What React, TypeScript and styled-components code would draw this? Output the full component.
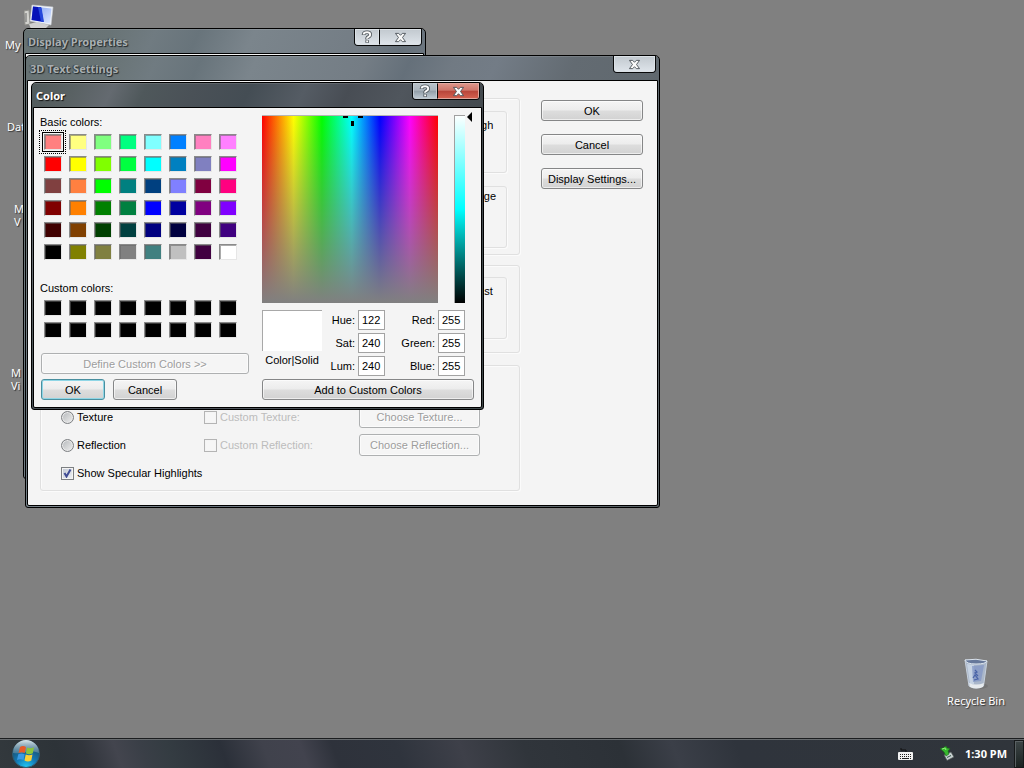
import React from "react";
import styled, { createGlobalStyle, css } from "styled-components";

const uiFont = `"Liberation Sans", Arial, sans-serif`;
const shellFont = `"Noto Sans", "Open Sans", sans-serif`;

const GlobalStyle = createGlobalStyle`
  *, *::before, *::after { box-sizing: border-box; }
  body { margin: 0; background: #808080; font: 11px/14px ${uiFont}; color: #000; }
  button, input { font: inherit; color: inherit; }
`;

const Screen = styled.div`
  display: flex;
  flex-direction: column;
  min-height: 100vh;
`;

const Desktop = styled.main`
  position: relative;
  flex: 1;
  min-height: 520px;
  overflow: hidden;
`;

/* ---------- desktop icons ---------- */

const Shortcut = styled.div<{ $x: number; $y: number }>`
  position: absolute;
  left: ${(p) => p.$x}px;
  top: ${(p) => p.$y}px;
  font: 11px/13px ${shellFont};
  color: #fff;
  text-shadow: 1px 1px 1px #333;
  white-space: pre-line;

  svg { display: block; margin: 0 0 8px 19px; }
`;

const Bin = styled(Shortcut)`
  left: auto;
  top: auto;
  right: 19px;
  bottom: 31px;
  svg { margin: 0 auto 4px; }
`;

/* ---------- windows ---------- */

const Frame = styled.section<{ $x: number; $y: number; $w: number; $h: number; $active?: boolean }>`
  position: absolute;
  left: ${(p) => p.$x}px;
  top: ${(p) => p.$y}px;
  width: ${(p) => p.$w}px;
  min-height: ${(p) => p.$h}px;
  display: flex;
  flex-direction: column;
  padding: 0 1px 1px;
  border: 1px solid #000;
  border-radius: 5px 5px 3px 3px;
  background: ${(p) =>
    p.$active
      ? "linear-gradient(115deg, #505a5b 0, #596163 40px, #646a70 75px, #4f585b 105px, #4a5157 150px, #444d54 200px, #555c64 250px, #484d54 290px, #50565d 340px, #454b50 400px, #3d4648 100%)"
      : "linear-gradient(115deg, #667172 0, #697476 80px, #707b81 120px, #68747b 160px, #7b858c 210px, #747d85 310px, #65707a 350px, #717a83 390px, #737c86 430px, #636b72 500px, #596266 100%)"};
`;

const TitleBar = styled.header<{ $active?: boolean }>`
  display: flex;
  justify-content: space-between;
  align-items: flex-start;
  height: 24px;
  padding: 0 2px 0 3px;
  border-top: 1px solid rgba(255, 255, 255, 0.12);

  h2 {
    margin: 0;
    font: bold 11px/24px ${shellFont};
    color: ${(p) => (p.$active ? "#fff" : "#a9afb1")};
    text-shadow: ${(p) => (p.$active ? "1px 1px 1px #111" : "1px 1px 1px #23292b, -1px 0 1px #333a3c")};
  }
`;

const Captions = styled.div`
  display: flex;
  margin-top: -1px;
  border: 1px solid #08090a;
  border-top: 0;
  border-radius: 0 0 4px 4px;
  overflow: hidden;
`;

const CaptionButton = styled.button<{ $kind: "help" | "close"; $active?: boolean }>`
  display: flex;
  align-items: center;
  justify-content: center;
  width: ${(p) => (p.$kind === "help" ? 24 : 41)}px;
  height: 16px;
  padding: 0;
  border: 1px solid ${(p) => (p.$active ? (p.$kind === "close" ? "#e2a79e" : "#c3cad0") : "#dbe1e6")};
  background: ${(p) =>
    !p.$active
      ? "linear-gradient(#c3cad0, #dde3e9)"
      : p.$kind === "close"
        ? "linear-gradient(#dc9488 0, #cf7569 45%, #b8453a 50%, #d3604f 100%)"
        : "linear-gradient(#b9c1c8 0, #aab4bc 45%, #929ea8 50%, #bcc7d0 100%)"};

  & + & { border-left: 1px solid #08090a; width: 42px; }
`;

const Body = styled.div`
  flex: 1;
  display: flex;
  border: 1px solid #000;
  border-radius: 0 0 2px 2px;
  background: #f4f4f4;
`;

const SettingsBody = styled(Body)`
  justify-content: space-between;
  align-items: flex-start;
  padding: 17px 14px 12px 12px;
`;

const ColorBody = styled(Body)`
  gap: 13px;
  padding: 7px 7px 7px 6px;
`;

/* ---------- controls ---------- */

const PushButton = styled.button<{ $w?: number; $h?: number; $default?: boolean }>`
  width: ${(p) => (p.$w ? p.$w + "px" : "100%")};
  height: ${(p) => p.$h ?? 21}px;
  flex: none;
  padding: 0;
  border: 1px solid #858687;
  border-radius: 3px;
  background: linear-gradient(#f5f5f5 0, #ececec 48%, #dddddd 52%, #d2d2d2 100%);
  box-shadow: inset 0 0 0 1px rgba(255, 255, 255, 0.6);
  text-align: center;
  white-space: nowrap;

  ${(p) =>
    p.$default &&
    css`
      border-color: #4a8f9f;
      box-shadow: inset 0 0 0 1px #8fd6e6;
    `}

  &:disabled {
    border-color: #aeb0b1;
    background: #f5f5f5;
    color: #9d9d9d;
    text-shadow: 1px 1px 0 #fff;
  }
`;

const Stack = styled.div<{ $gap: number }>`
  display: flex;
  flex-direction: column;
  gap: ${(p) => p.$gap}px;
`;

const Commands = styled(Stack)`
  padding-top: 2px;
`;

const GroupBox = styled.div`
  display: flex;
  flex-direction: column;
  align-items: flex-end;
  gap: 13px;
  width: 480px;
  padding: 12px 12px 6px;
  border: 1px solid #e0e0e0;
  border-radius: 3px;
  box-shadow: inset 1px 1px 0 #fbfbfb, 1px 1px 0 #fbfbfb;
`;

const SpeedGroup = styled(GroupBox)`
  padding-block: 11px 13px;
`;

const SliderBox = styled.div<{ $raised?: boolean }>`
  display: flex;
  justify-content: flex-end;
  width: 220px;
  height: 62px;
  padding-top: ${(p) => (p.$raised ? 2 : 6)}px;
  border: 1px solid #e0e0e0;
  border-radius: 3px;
  box-shadow: 1px 1px 0 #fbfbfb;

  span { width: 48px; text-align: center; }
`;

const StyleGroup = styled(GroupBox)`
  align-items: stretch;
  gap: 6px;
  margin-top: 2px;
  padding: 40px 39px 6px 20px;
`;

const OptionRow = styled.div`
  display: grid;
  grid-template-columns: 143px 155px 121px;
  align-items: center;
  height: 22px;
`;

const Option = styled.label<{ $disabled?: boolean }>`
  display: flex;
  align-items: center;
  gap: 3px;
  white-space: nowrap;
  color: ${(p) => (p.$disabled ? "#bcbcbc" : "#000")};
`;

const Tick = styled.input`
  appearance: none;
  width: 13px;
  height: 13px;
  margin: 0;
  border: 1px solid #7c7f82;
  background: linear-gradient(135deg, #c9cdd1, #fafafa);
  box-shadow: inset 0 0 0 1px #f4f4f4;

  &[type="radio"] {
    border-radius: 50%;
    background: linear-gradient(135deg, #b4b7ba, #efefef);
    box-shadow: inset 0 0 0 1px #e9e9e9;
  }
  &:disabled { border-color: #b4b4b4; background: #f6f6f6; }
  &:checked {
    background: url("data:image/svg+xml,%3Csvg xmlns='http://www.w3.org/2000/svg' viewBox='0 0 11 11'%3E%3Cpath d='M2.5 5l2 3.5L8.5 1.5' fill='none' stroke='%23404c94' stroke-width='2'/%3E%3C/svg%3E") center / 11px 11px, linear-gradient(135deg, #bfc6d2, #f2f4f8);
  }
`;

/* ---------- colour dialog parts ---------- */

const LeftPane = styled.div`
  display: flex;
  flex-direction: column;
  width: 209px;
`;

const SwatchSection = styled.div<{ $space: number }>`
  display: flex;
  flex-direction: column;
  gap: 2px;
  margin-bottom: ${(p) => p.$space}px;
`;

const SwatchGrid = styled.div`
  display: grid;
  grid-template-columns: repeat(8, 25px);
  grid-auto-rows: 22px;
`;

const Swatch = styled.button<{ $color: string; $selected?: boolean }>`
  display: flex;
  padding: 3px 3px 3px 4px;
  border: 0;
  background: none;

  &::before {
    content: "";
    width: 18px;
    height: 16px;
    border: 1px solid #8a8a8a;
    border-right-color: #e6e6e6;
    border-bottom-color: #e6e6e6;
    background: ${(p) => p.$color};
    box-shadow: inset 1px 1px 0 rgba(100, 100, 100, 0.55)${(p) => (p.$selected ? ", 0 0 0 1px #f4f4f4, 0 0 0 2px #000" : "")};
  }

  ${(p) =>
    p.$selected &&
    css`
      outline: 1px dotted #000;
    `}
`;

const LeftActions = styled.div`
  display: flex;
  flex-wrap: wrap;
  gap: 5px 8px;
  padding-left: 1px;
`;

const RightPane = styled.div`
  flex: 1;
  display: flex;
  flex-direction: column;
`;

const PickerRow = styled.div`
  display: flex;
  align-items: flex-start;
  margin-bottom: 7px;
`;

const Spectrum = styled.div`
  width: 176px;
  height: 188px;
  margin-right: 16px;
  border-top: 1px solid #b5b5b5;
  background: linear-gradient(rgba(128, 128, 128, 0), #808080),
    linear-gradient(90deg, #f00, #ff0 18%, #0f0 34%, #0ff 51%, #00f 67%, #f0f 84%, #f00);
  svg { display: block; }
`;

const Luminance = styled.div`
  width: 11px;
  height: 188px;
  margin-right: 2px;
  border: 1px solid #a0a0a0;
  border-width: 1px 0 0 1px;
  background: linear-gradient(#fff, #0ff 50%, #000) border-box;
`;

const Pointer = styled.svg`
  margin-top: -3px;
`;

const ValuesRow = styled.div`
  display: flex;
  margin-bottom: 3px;
`;

const Preview = styled.div`
  width: 60px;
  text-align: center;
  white-space: nowrap;

  &::before {
    content: "";
    display: block;
    height: 41px;
    margin-bottom: 2px;
    border: 1px solid #a8a8a8;
    border-width: 1px 0 0 1px;
    background: #fff;
  }
`;

const Fields = styled.div<{ $w: number }>`
  width: ${(p) => p.$w}px;
  display: flex;
  flex-direction: column;
  gap: 3px;

  label {
    display: flex;
    justify-content: flex-end;
    align-items: center;
    gap: 3px;
  }
  input {
    width: 27px;
    height: 20px;
    padding: 0 0 0 3px;
    border: 1px solid #a3a3a3;
    background: #fff;
  }
`;

/* ---------- taskbar ---------- */

const Taskbar = styled.footer`
  display: flex;
  align-items: center;
  height: 30px;
  padding-left: 12px;
  border-top: 1px solid #1b1d1f;
  box-shadow: inset 0 1px 0 #676b6e;
  background: linear-gradient(70deg, #33393d 0, #2d3338 60px, #31353c 85px, #43454e 115px, #3a3f47 140px, #343c42 165px, #2b3039 215px, #40424c 255px, #42434e 290px, #2e323b 320px, #2f343d 380px, #3e4049 440px, #30353b 500px, #2c3137 590px, #3b3f48 640px, #2f343c 700px, #30353b 100%);
  font: bold 11px/14px ${shellFont};
  color: #fff;
`;

const StartButton = styled.button`
  align-self: flex-end;
  height: 28px;
  padding: 0;
  border: 0;
  background: none;
  svg { display: block; }
`;

const Tray = styled.div`
  display: flex;
  align-items: center;
  margin-left: auto;
  height: 100%;

  svg:first-child { margin-right: 27px; }
  time { margin: 0 7px 0 11px; white-space: nowrap; }
`;

const ShowDesktop = styled.button`
  width: 10px;
  height: 28px;
  padding: 0;
  border: 1px solid #16191a;
  box-shadow: inset 1px 1px 0 #596062;
  background: linear-gradient(#3d4546, #1b2322);
`;

/* ---------- drawings ---------- */

const CrossIcon = () => (
  <svg width="13" height="11" viewBox="0 0 14 12" aria-hidden="true">
    <path d="M1.5 1.5H5L7 3.6 9 1.5H12.5L9.2 6 12.5 10.5H9L7 8.4 5 10.5H1.5L4.8 6Z" fill="#fafafa" stroke="#4b5258" strokeWidth="1" strokeLinejoin="round" />
  </svg>
);

const HelpIcon = () => (
  <svg width="12" height="14" viewBox="0 0 12 14" aria-hidden="true" fill="none">
    <path d="M2.600 5V4.500Q2.800 2.300 6 2.300T9.200 4.700Q9.200 6 7.500 6.900T6.200 9.200M6.200 10.200V12.800" stroke="#4b5258" strokeWidth="3.600" />
    <path d="M2.600 4.500Q2.800 2.300 6 2.300T9.200 4.700Q9.200 6 7.500 6.900T6.200 8.800M6.200 10.500V12.300" stroke="#fafafa" strokeWidth="2" />
  </svg>
);

const ComputerIcon = () => (
  <svg width="30" height="26" viewBox="0 0 30 26" aria-hidden="true">
    <defs>
      <linearGradient id="screen" x1="0" x2="1" y1="0" y2="1">
        <stop offset="0" stopColor="#7f9eef" />
        <stop offset="1" stopColor="#dfeaff" />
      </linearGradient>
    </defs>
    <path d="M0 7l5-1 1 14-5 1z" fill="#d2d2ce" stroke="#8f8f8b" />
    <path d="M2 9v9" stroke="#666" />
    <path d="M5 20l8-2 12 3-4 4H7z" fill="#d0d0d0" />
    <path d="M8 1L29 3 27 21 6 17z" fill="#f2f5fa" stroke="#c8ccd4" strokeWidth=".6" />
    <path d="M9 2.500L27.500 4.500 26 19.500 7.500 16z" fill="url(#screen)" />
    <path d="M9 2.500L17 3.300 19.500 18 7.500 16z" fill="#0712b8" />
    <path d="M14 3l3.500.4L20 18l-3-.5z" fill="#2448db" />
  </svg>
);

const BinIcon = () => (
  <svg width="28" height="32" viewBox="0 0 28 32" aria-hidden="true">
    <ellipse cx="17" cy="28" rx="9" ry="3" fill="#686868" opacity=".5" />
    <path d="M3 2L25 3 21.500 28Q14 32 7 28z" fill="#aab7ca" stroke="#c6d0dc" />
    <path d="M5 6L12 7 12 26H8z" fill="#cdd9e8" opacity=".8" />
    <path d="M10 8l12-1-3 16-8 1z" fill="#8196c4" opacity=".75" />
    <path d="M3 2Q14 0 25 3 24 6 14 6T3 2z" fill="#66789a" stroke="#dbe3ec" />
    <path d="M13 12l2 2-2 1 3 3M11 20l2-3 3 4-4 1" fill="none" stroke="#4862a6" strokeWidth="1.200" />
    <path d="M7 25Q14 28 22 25L21 29Q14 32 8 29z" fill="#e7ebee" />
  </svg>
);

const StartOrb = () => (
  <svg width="28" height="28" viewBox="0 0 28 28" aria-hidden="true">
    <defs>
      <radialGradient id="orb" cx=".5" cy="1" r=".9">
        <stop offset="0" stopColor="#20cdf8" />
        <stop offset=".45" stopColor="#1479b4" />
        <stop offset="1" stopColor="#194764" />
      </radialGradient>
      <linearGradient id="gloss" x1="0" x2="0" y1="0" y2="1">
        <stop offset="0" stopColor="#dce8ed" />
        <stop offset="1" stopColor="#7197ab" stopOpacity=".5" />
      </linearGradient>
    </defs>
    <circle cx="14" cy="14" r="13.500" fill="url(#orb)" stroke="#315b70" />
    <path d="M1 13A13 13 0 0 1 27 13Q20 10 14 12T1 13z" fill="url(#gloss)" />
    <path d="M8 7Q11 5 14 7L12.800 13Q9.500 11.500 6.500 13z" fill="#e85b28" />
    <path d="M15 7.500Q18.500 9 22 7.200L20.800 13.300Q17 15 13.900 13.300z" fill="#8ac53c" />
    <path d="M6.300 14.200Q9.500 12.700 12.600 14.200L11.500 20Q8 18.500 5 20z" fill="#3a9ae4" />
    <path d="M13.700 14.500Q17 16 20.500 14.400L19.300 20.500Q16 22.300 12.500 20.500z" fill="#fbd035" />
  </svg>
);

const KeyboardIcon = () => (
  <svg width="15" height="12" viewBox="0 0 15 12" aria-hidden="true">
    <path d="M3 0v2h5v2" fill="none" stroke="#111" />
    <rect x="0" y="4" width="15" height="8" rx="1" fill="#f2f2f2" />
    <path d="M2 6.500h11M2 8.500h11" stroke="#222" strokeDasharray="1 1" />
    <path d="M2 10.500h1M4 10.500h7M12 10.500h1" stroke="#222" />
  </svg>
);

const EjectIcon = () => (
  <svg width="14" height="15" viewBox="0 0 14 15" aria-hidden="true">
    <path d="M4 9l7-3 3 5-7 3.500z" fill="#c7d0d0" stroke="#4a5352" strokeWidth=".7" />
    <path d="M7 11.500l4-2" stroke="#36554a" />
    <path d="M0 2.500L3 2l3-2 1 2 3 .5L8 5l1 3-3 2-2-4z" fill="#37b82e" stroke="#176c18" strokeWidth=".6" />
    <path d="M2 3l3-1 1 2" fill="none" stroke="#93ec7d" />
  </svg>
);

/* ---------- data ---------- */

const basicColors = [
  "#ff8080", "#ffff80", "#80ff80", "#00ff80", "#80ffff", "#0080ff", "#ff80c0", "#ff80ff",
  "#ff0000", "#ffff00", "#80ff00", "#00ff40", "#00ffff", "#0080c0", "#8080c0", "#ff00ff",
  "#804040", "#ff8040", "#00ff00", "#008080", "#004080", "#8080ff", "#800040", "#ff0080",
  "#800000", "#ff8000", "#008000", "#008040", "#0000ff", "#0000a0", "#800080", "#8000ff",
  "#400000", "#804000", "#004000", "#004040", "#000080", "#000040", "#400040", "#400080",
  "#000000", "#808000", "#808040", "#808080", "#408080", "#c0c0c0", "#400040", "#ffffff",
];
const customColors = Array<string>(16).fill("#000000");

type WindowProps = {
  title: string;
  x: number;
  y: number;
  w: number;
  h: number;
  active?: boolean;
  help?: boolean;
  children: React.ReactNode;
};

const Window = ({ title, x, y, w, h, active, help, children }: WindowProps) => (
  <Frame $x={x} $y={y} $w={w} $h={h} $active={active} aria-label={title}>
    <TitleBar $active={active}>
      <h2>{title}</h2>
      <Captions>
        {help && (
          <CaptionButton $kind="help" $active={active} aria-label="Help">
            <HelpIcon />
          </CaptionButton>
        )}
        <CaptionButton $kind="close" $active={active} aria-label="Close">
          <CrossIcon />
        </CaptionButton>
      </Captions>
    </TitleBar>
    {children}
  </Frame>
);

const Swatches = ({ label, colors, space, selected }: { label: string; colors: string[]; space: number; selected?: number }) => (
  <SwatchSection $space={space}>
    <span>{label}</span>
    <SwatchGrid>
      {colors.map((c, i) => (
        <Swatch key={i} $color={c} $selected={i === selected} aria-label={c} />
      ))}
    </SwatchGrid>
  </SwatchSection>
);

const ValueFields = ({ width, values }: { width: number; values: [string, string][] }) => (
  <Fields $w={width}>
    {values.map(([name, value]) => (
      <label key={name}>
        {name}
        <input defaultValue={value} />
      </label>
    ))}
  </Fields>
);

const ColorDialog = () => (
  <Window title="Color" x={31} y={82} w={453} h={328} active help>
    <ColorBody>
      <LeftPane>
        <Swatches label="Basic colors:" colors={basicColors} space={18} selected={0} />
        <Swatches label="Custom colors:" colors={customColors} space={12} />
        <LeftActions>
          <PushButton disabled>Define Custom Colors &gt;&gt;</PushButton>
          <PushButton $w={64} $default>OK</PushButton>
          <PushButton $w={64}>Cancel</PushButton>
        </LeftActions>
      </LeftPane>
      <RightPane>
        <PickerRow>
          <Spectrum>
            <svg width="176" height="12" aria-hidden="true">
              <path d="M81 1h5M96 1h5" stroke="#000" strokeWidth="2" />
              <path d="M90.500 5v5" stroke="#000" strokeWidth="3" />
            </svg>
          </Spectrum>
          <Luminance />
          <Pointer width="5" height="10" viewBox="0 0 5 10" aria-hidden="true">
            <path d="M5 0v10L0 5z" />
          </Pointer>
        </PickerRow>
        <ValuesRow>
          <Preview>Color|Solid</Preview>
          <ValueFields width={63} values={[["Hue:", "122"], ["Sat:", "240"], ["Lum:", "240"]]} />
          <ValueFields width={80} values={[["Red:", "255"], ["Green:", "255"], ["Blue:", "255"]]} />
        </ValuesRow>
        <PushButton>Add to Custom Colors</PushButton>
      </RightPane>
    </ColorBody>
  </Window>
);

const SettingsDialog = () => (
  <Window title="3D Text Settings" x={25} y={55} w={635} h={453}>
    <SettingsBody>
      <Stack $gap={10}>
        <GroupBox>
          <SliderBox><span>High</span></SliderBox>
          <SliderBox $raised><span>Large</span></SliderBox>
        </GroupBox>
        <SpeedGroup>
          <SliderBox><span>Fast</span></SliderBox>
        </SpeedGroup>
        <StyleGroup>
          <OptionRow>
            <Option><Tick type="radio" name="surface" />Texture</Option>
            <Option $disabled><Tick type="checkbox" disabled />Custom Texture:</Option>
            <PushButton $h={22} disabled>Choose Texture...</PushButton>
          </OptionRow>
          <OptionRow>
            <Option><Tick type="radio" name="surface" />Reflection</Option>
            <Option $disabled><Tick type="checkbox" disabled />Custom Reflection:</Option>
            <PushButton $h={22} disabled>Choose Reflection...</PushButton>
          </OptionRow>
          <OptionRow>
            <Option><Tick type="checkbox" defaultChecked />Show Specular Highlights</Option>
          </OptionRow>
        </StyleGroup>
      </Stack>
      <Commands $gap={13}>
        <PushButton $w={102}>OK</PushButton>
        <PushButton $w={102}>Cancel</PushButton>
        <PushButton $w={102}>Display Settings...</PushButton>
      </Commands>
    </SettingsBody>
  </Window>
);

export default function App() {
  return (
    <Screen>
      <GlobalStyle />
      <Desktop>
        <Shortcut $x={5} $y={4}><ComputerIcon />My</Shortcut>
        <Shortcut $x={7} $y={120}>Dat</Shortcut>
        <Shortcut $x={14} $y={202}>{"M\nV"}</Shortcut>
        <Shortcut $x={11} $y={366}>{"M\nVi"}</Shortcut>
        <Bin $x={0} $y={0}><BinIcon />Recycle Bin</Bin>
        <Window title="Display Properties" x={23} y={28} w={403} h={451} help>
          <Body />
        </Window>
        <SettingsDialog />
        <ColorDialog />
      </Desktop>
      <Taskbar>
        <StartButton aria-label="Start"><StartOrb /></StartButton>
        <Tray>
          <KeyboardIcon />
          <EjectIcon />
          <time>1:30 PM</time>
          <ShowDesktop aria-label="Show desktop" />
        </Tray>
      </Taskbar>
    </Screen>
  );
}
